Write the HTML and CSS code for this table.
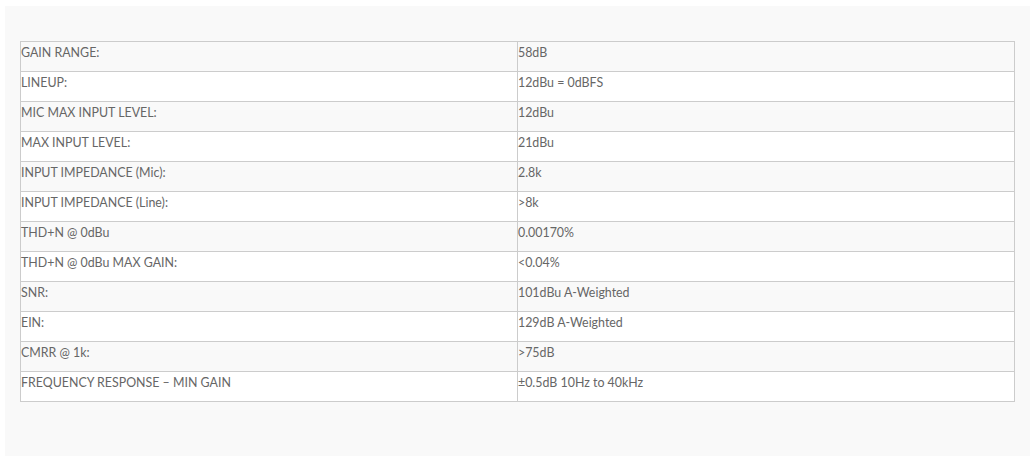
FILE: index.html
```html
<!DOCTYPE html>
<html>
<head>
<meta charset="utf-8">
<link rel="stylesheet" href="styles.css">
</head>
<body>
<div class="panel">
  <table class="specs">
    <tr><td>GAIN RANGE:</td><td>58dB</td></tr>
    <tr><td>LINEUP:</td><td>12dBu = 0dBFS</td></tr>
    <tr><td>MIC MAX INPUT LEVEL:</td><td>12dBu</td></tr>
    <tr><td>MAX INPUT LEVEL:</td><td>21dBu</td></tr>
    <tr><td>INPUT IMPEDANCE (Mic):</td><td>2.8k</td></tr>
    <tr><td>INPUT IMPEDANCE (Line):</td><td>&gt;8k</td></tr>
    <tr><td>THD+N @ 0dBu</td><td>0.00170%</td></tr>
    <tr><td>THD+N @ 0dBu MAX GAIN:</td><td>&lt;0.04%</td></tr>
    <tr><td>SNR:</td><td>101dBu A-Weighted</td></tr>
    <tr><td>EIN:</td><td>129dB A-Weighted</td></tr>
    <tr><td>CMRR @ 1k:</td><td>&gt;75dB</td></tr>
    <tr><td>FREQUENCY RESPONSE – MIN GAIN</td><td>±0.5dB 10Hz to 40kHz</td></tr>
  </table>
</div>
</body>
</html>
```
FILE: styles.css
```css
html, body {
  margin: 0;
  padding: 0;
  background: #ffffff;
}
body {
  padding: 6px 6px 8px 5px;
  font-family: Lato, "Liberation Sans", sans-serif;
}
.panel {
  background: #f9f9f9;
  padding: 35px 15px 55px 15px;
  height: 450px;
  box-sizing: border-box;
}
.specs {
  width: 100%;
  border-collapse: collapse;
  border: 1px solid #cccccc;
}
.specs td {
  border: 1px solid #cccccc;
  height: 30px;
  box-sizing: border-box;
  padding: 3px 0 0 0;
  vertical-align: top;
  font-size: 12.4px;
  line-height: 16px;
  color: #666666;
  width: 50%;
}
.specs tr:nth-child(odd) td {
  background: #f9f9f9;
}
.specs tr:nth-child(even) td {
  background: #ffffff;
}
```
